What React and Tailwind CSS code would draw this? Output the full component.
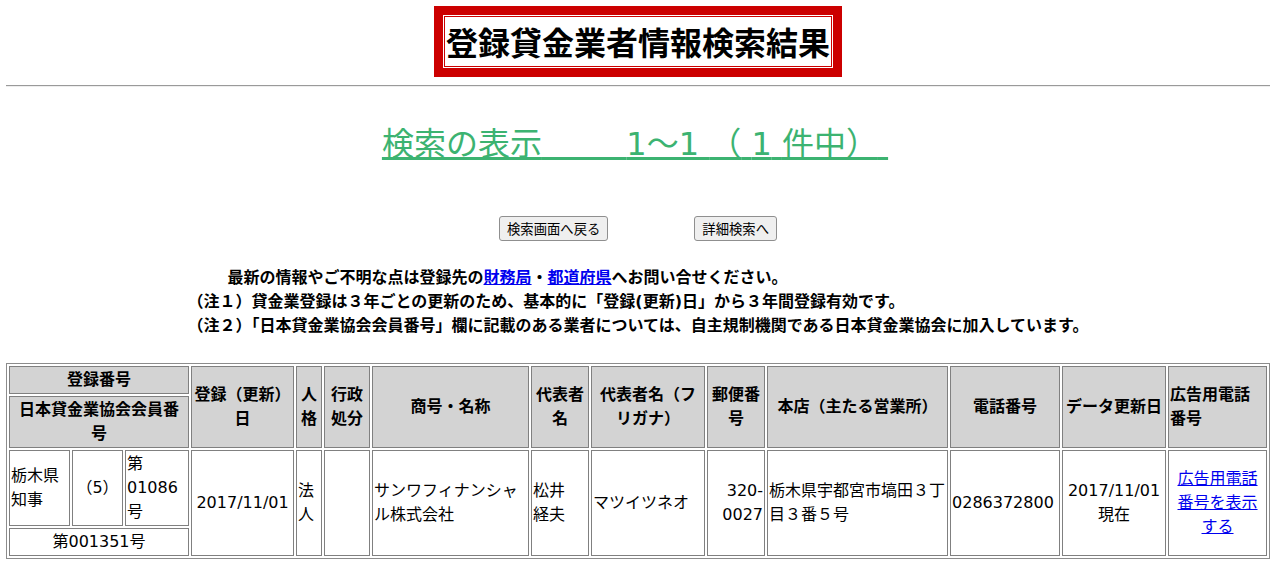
import React from "react";

const th = "border border-[#808080] bg-[#d3d3d3] p-px font-bold";
const td = "border border-[#808080] p-px";

export default function App() {
  return (
    <div className="min-h-[582px] bg-white px-[6px] pt-[6px] text-black font-['DejaVu_Sans','Noto_Sans_CJK_JP',sans-serif]">
      <div className="flex justify-center">
        <div className="border-[9px] border-[#cc0000] p-px">
          <div className="border border-[#cc0000] px-px">
            <h1 className="text-[32px] leading-[49px] font-bold font-['Noto_Sans_CJK_JP',sans-serif]">
              登録貸金業者情報検索結果
            </h1>
          </div>
        </div>
      </div>

      <hr className="mt-[8px] h-[2px] border-0 border-t border-b border-t-[#9a9a9a] border-b-[#eeeeee]" />

      <div className="mt-[34px] flex justify-center">
        <a href="#" className="mr-[6px] text-[32px] leading-[46px] text-[#3cb371] underline">
          検索の表示{"\u3000\u3000\u00a0\u00a0"}1～1{"\u00a0"}（{"\u00a0"}1{"\u00a0"}件中）{"\u00a0"}
        </a>
      </div>

      <div className="mt-[49px] flex justify-center gap-[86px] font-['Noto_Sans_CJK_JP',sans-serif] text-[13.33px]">
        <button className="h-[25px] rounded-[3px] border border-[#8f8f8f] bg-[#efefef] px-[7px]">
          検索画面へ戻る
        </button>
        <button className="h-[25px] rounded-[3px] border border-[#8f8f8f] bg-[#efefef] px-[7px]">
          詳細検索へ
        </button>
      </div>

      <div className="mt-[25px] flex justify-center">
        <div className="text-[16px] leading-6 font-bold">
          <p className="pl-[40px]">
            最新の情報やご不明な点は登録先の
            <a href="#" className="text-[#0000ee] underline">財務局</a>・
            <a href="#" className="text-[#0000ee] underline">都道府県</a>
            へお問い合せください。
          </p>
          <p>（注１）貸金業登録は３年ごとの更新のため、基本的に「登録(更新)日」から３年間登録有効です。</p>
          <p>（注２）「日本貸金業協会会員番号」欄に記載のある業者については、自主規制機関である日本貸金業協会に加入しています。</p>
        </div>
      </div>

      <table className="mt-[25px] w-[1264px] table-fixed border-separate border-spacing-[2px] border border-[#8c8c8c] text-[16px] leading-6">
        <colgroup>
          <col className="w-[61px]" />
          <col className="w-[51px]" />
          <col className="w-[64px]" />
          <col className="w-[103px]" />
          <col className="w-[26px]" />
          <col className="w-[46px]" />
          <col className="w-[157px]" />
          <col className="w-[58px]" />
          <col className="w-[114px]" />
          <col className="w-[58px]" />
          <col className="w-[181px]" />
          <col className="w-[110px]" />
          <col className="w-[104px]" />
          <col className="w-[99px]" />
        </colgroup>
        <tbody>
          <tr>
            <th colSpan={3} className={th}>登録番号</th>
            <th rowSpan={2} className={th}>登録（更新）日</th>
            <th rowSpan={2} className={th}>人格</th>
            <th rowSpan={2} className={th}>行政処分</th>
            <th rowSpan={2} className={th}>商号・名称</th>
            <th rowSpan={2} className={th}>代表者名</th>
            <th rowSpan={2} className={th}>代表者名（フリガナ）</th>
            <th rowSpan={2} className={th}>郵便番号</th>
            <th rowSpan={2} className={th}>本店（主たる営業所）</th>
            <th rowSpan={2} className={th}>電話番号</th>
            <th rowSpan={2} className={th}>データ更新日</th>
            <th rowSpan={2} className={`${th} text-left`}>広告用電話番号</th>
          </tr>
          <tr>
            <th colSpan={3} className={`${th} px-[3px]`}>日本貸金業協会会員番号</th>
          </tr>
          <tr>
            <td className={td}>栃木県知事</td>
            <td className={`${td} text-center`}>（5）</td>
            <td className={td}>第01086号</td>
            <td rowSpan={2} className={`${td} text-center`}>2017/11/01</td>
            <td rowSpan={2} className={td}>法人</td>
            <td rowSpan={2} className={td}></td>
            <td rowSpan={2} className={td}>サンワフィナンシャル株式会社</td>
            <td rowSpan={2} className={td}>松井　経夫</td>
            <td rowSpan={2} className={td}>マツイツネオ</td>
            <td rowSpan={2} className={`${td} text-right`}>
              320-
              <br />
              0027
            </td>
            <td rowSpan={2} className={td}>栃木県宇都宮市塙田３丁目３番５号</td>
            <td rowSpan={2} className={td}>0286372800</td>
            <td rowSpan={2} className={`${td} text-center`}>2017/11/01現在</td>
            <td rowSpan={2} className={`${td} text-center`}>
              <a href="#" className="text-[#0000ee] underline">広告用電話番号を表示する</a>
            </td>
          </tr>
          <tr>
            <td colSpan={3} className={`${td} text-center`}>第001351号</td>
          </tr>
        </tbody>
      </table>
    </div>
  );
}
